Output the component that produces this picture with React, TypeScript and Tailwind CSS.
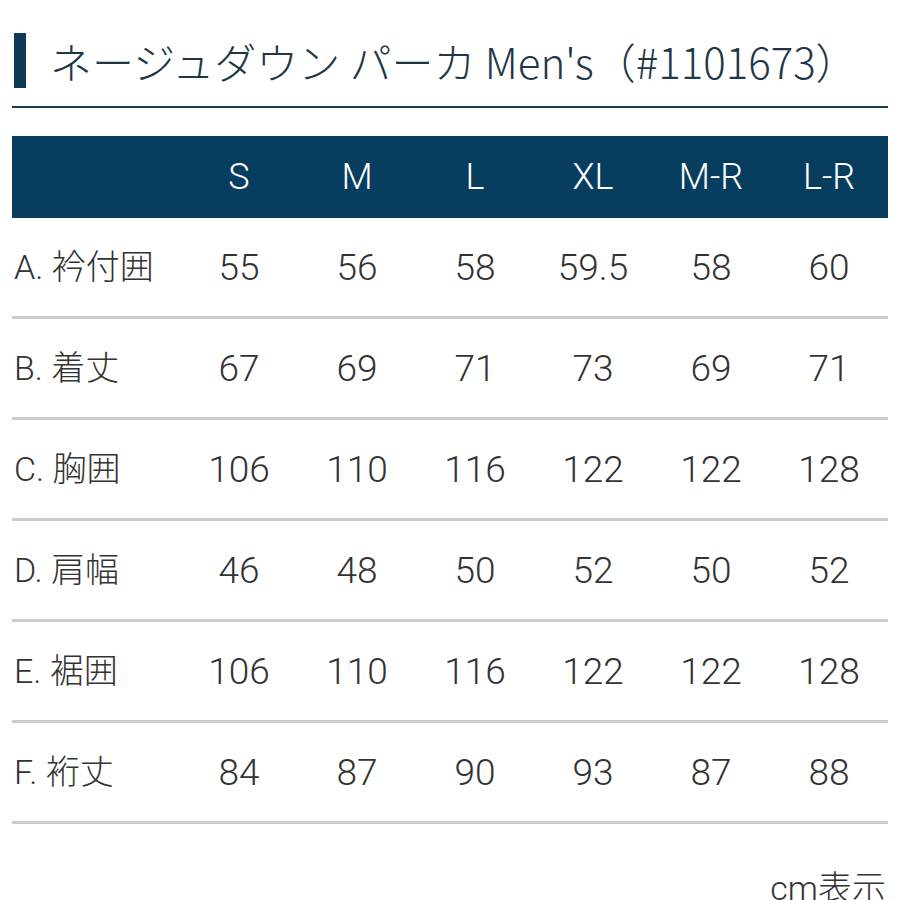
import React from 'react';

const SIZES = ['S', 'M', 'L', 'XL', 'M-R', 'L-R'];

const ROWS: { label: string; values: string[] }[] = [
  { label: 'A. 衿付囲', values: ['55', '56', '58', '59.5', '58', '60'] },
  { label: 'B. 着丈', values: ['67', '69', '71', '73', '69', '71'] },
  { label: 'C. 胸囲', values: ['106', '110', '116', '122', '122', '128'] },
  { label: 'D. 肩幅', values: ['46', '48', '50', '52', '50', '52'] },
  { label: 'E. 裾囲', values: ['106', '110', '116', '122', '122', '128'] },
  { label: 'F. 裄丈', values: ['84', '87', '90', '93', '87', '88'] },
];

const FONT = "font-['Roboto','Noto_Sans_CJK_JP',sans-serif] font-light";

export default function App() {
  return (
    <div className={`w-[900px] h-[900px] overflow-hidden bg-white ${FONT}`}>
      <div className="px-3">
        {/* Title */}
        <div className="flex items-center pt-[33px] pb-[18px] border-b-2 border-[#1b3d52]">
          <div className="w-[12px] h-[55px] bg-[#0f3a57] ml-[2px]" />
          <h1 className="ml-[24px] text-[42px] leading-none text-[#1f3747] whitespace-nowrap font-['Noto_Sans_CJK_JP',sans-serif]">
            ネージュダウン パーカ Men's（#1101673）
          </h1>
        </div>

        {/* Table */}
        <div className="mt-[28px]">
          <div className="grid grid-cols-[168px_repeat(6,118px)] h-[82px] bg-[#073d5f] text-white items-center">
            <div />
            {SIZES.map(s => (
              <div key={s} className="text-center text-[36px] leading-none">
                {s}
              </div>
            ))}
          </div>
          {ROWS.map(row => (
            <div
              key={row.label}
              className="grid grid-cols-[168px_repeat(6,118px)] h-[101px] border-b-[3px] border-[#cccccc] items-center text-[#333333]"
            >
              <div className="text-[34px] leading-none pl-[2px] whitespace-nowrap">{row.label}</div>
              {row.values.map((v, i) => (
                <div key={i} className="text-center text-[37px] leading-none">
                  {v}
                </div>
              ))}
            </div>
          ))}
        </div>

        <div className="mt-[47px] text-right text-[34px] leading-none text-[#333333] pr-[2px]">cm表示</div>
      </div>
    </div>
  );
}
